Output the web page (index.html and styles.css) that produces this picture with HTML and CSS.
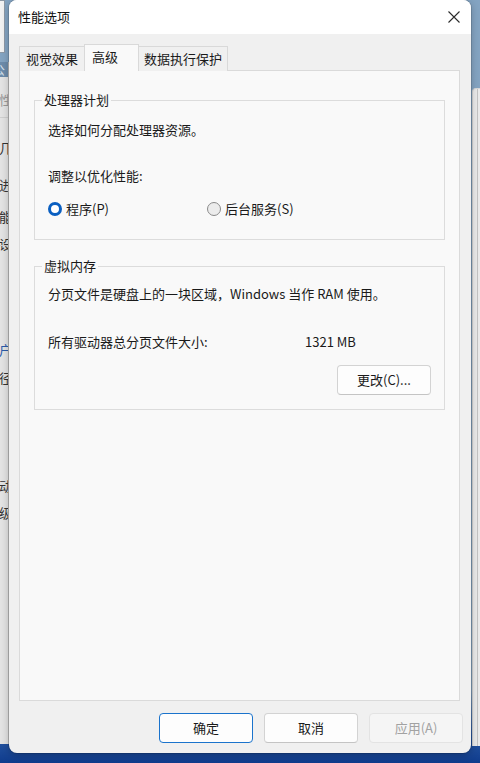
FILE: index.html
```html
<!DOCTYPE html>
<html lang="zh-CN">
<head>
<meta charset="utf-8">
<title>性能选项</title>
<link rel="stylesheet" href="styles.css">
</head>
<body>
<div class="desk">
  <div class="bg-box"></div>
  <div class="bg-left">
    <div class="bl-head">公</div>
    <div class="bl-row r1">性</div>
    <div class="bl-row r2">几</div>
    <div class="bl-row r3">进</div>
    <div class="bl-row r4">能</div>
    <div class="bl-row r5">设</div>
    <div class="bl-row r6">户</div>
    <div class="bl-row r7">径</div>
    <div class="bl-row r8">动</div>
    <div class="bl-row r9">级</div>
  </div>
  <div class="bg-right"><div class="br-line"></div></div>

  <div class="dialog">
    <div class="titlebar">
      <span class="title">性能选项</span>
      <svg class="close" width="12" height="12" viewBox="0 0 12 12"><path d="M0.5 0.5 L11.5 11.5 M11.5 0.5 L0.5 11.5" stroke="#2b2b2b" stroke-width="1.1" fill="none"/></svg>
    </div>
    <div class="body">
      <div class="tabs">
        <div class="tab t1">视觉效果</div>
        <div class="tab t2 active">高级</div>
        <div class="tab t3">数据执行保护</div>
      </div>
      <div class="panel">
        <fieldset class="group g1">
          <legend>处理器计划</legend>
          <p class="line l1">选择如何分配处理器资源。</p>
          <p class="line l2">调整以优化性能:</p>
          <div class="radios">
            <label class="radio r-a"><span class="dot on"></span>程序(P)</label>
            <label class="radio r-b"><span class="dot"></span>后台服务(S)</label>
          </div>
        </fieldset>
        <fieldset class="group g2">
          <legend>虚拟内存</legend>
          <p class="line l3">分页文件是硬盘上的一块区域，Windows 当作 RAM 使用。</p>
          <div class="line size-row"><span class="size-label">所有驱动器总分页文件大小:</span><span class="size-val">1321 MB</span></div>
          <div class="change-row"><button class="btn change">更改(C)...</button></div>
        </fieldset>
      </div>
      <div class="buttons">
        <button class="btn primary">确定</button>
        <button class="btn">取消</button>
        <button class="btn disabled">应用(A)</button>
      </div>
    </div>
  </div>
</div>
</body>
</html>
```
FILE: styles.css
```css
* { box-sizing: border-box; }
html, body { margin: 0; padding: 0; }
body {
  width: 480px;
  height: 763px;
  overflow: hidden;
  font-family: "Noto Sans CJK SC", "Noto Sans", sans-serif;
  font-size: 13px;
  color: #1a1a1a;
}
.desk {
  position: relative;
  width: 480px;
  height: 763px;
  overflow: hidden;
  background: linear-gradient(to bottom, #84a4c2 0px, #86a5c2 690px, #2a5aa6 735px, #0f3b8c 763px);
}
.bg-box {
  position: absolute;
  left: -40px; top: 0;
  width: 45px; height: 53px;
  background: #f3f3f3;
  border: 1px solid #8d99a6;
}
.bg-left {
  position: absolute;
  left: -100px; top: 62px;
  width: 109px; height: 682px;
  background: #e4e4e4;
  border-right: 1px solid #c9c9c9;
  overflow: hidden;
}
.bl-head {
  height: 15px;
  background: #6d8cab;
  color: #dde6ef;
  font-size: 12px;
  line-height: 15px;
  text-align: right;
  padding-right: 3px;
}
.bl-row {
  position: absolute;
  right: -4px;
  font-size: 13px;
  line-height: 16px;
  color: #333;
}
.r1 { top: 30px; color: #9a9a9a; }
.r2 { top: 78px; }
.r3 { top: 115px; }
.r4 { top: 147px; }
.r5 { top: 174px; }
.r6 { top: 280px; color: #2a5ba8; }
.r7 { top: 308px; }
.r8 { top: 416px; }
.r9 { top: 443px; }
.bg-left::before {
  content: "";
  position: absolute; left: 0; right: 0; top: 55px; height: 1px; background: #cfcfcf;
}
.bg-left::after {
  content: "";
  position: absolute; left: 0; right: 0; top: 183px; height: 1px; background: #cfcfcf;
}
.bg-right {
  position: absolute;
  left: 472px; top: 88px;
  width: 40px; height: 658px;
  background: #ebebeb;
  border-left: 1px solid #cfcfcf;
  border-top: 1px solid #d8d8d8;
  border-top-left-radius: 4px;
}
.br-line {
  position: absolute;
  left: 4px; top: 0; bottom: 0;
  width: 1px;
  background: #c4c4c4;
}

.dialog {
  position: absolute;
  left: 9px; top: 0;
  width: 462px; height: 753px;
  background: #f0f0f0;
  border-radius: 8px;
  overflow: hidden;
  box-shadow: 0 0 0 1px rgba(0,0,0,0.12), 0 2px 8px rgba(0,0,0,0.25);
  display: flex;
  flex-direction: column;
}
.titlebar {
  height: 34px;
  background: #ffffff;
  display: flex;
  align-items: center;
  justify-content: space-between;
  padding: 0 11px 0 9px;
  flex: none;
}
.title { font-size: 13px; line-height: 18px; color: #111; }
.close { display: block; margin-top: -1px; }

.body {
  flex: 1;
  display: flex;
  flex-direction: column;
  padding: 10px 0 0 10px;
}
.tabs {
  display: flex;
  align-items: flex-end;
  height: 27px;
  position: relative;
  z-index: 2;
  margin-bottom: -1px;
}
.tab {
  height: 25px;
  border: 1px solid #d9d9d9;
  border-bottom: none;
  background: #f0f0f0;
  line-height: 23px;
  font-size: 13px;
  color: #1a1a1a;
  text-align: center;
}
.t1 { width: 65px; border-right: none; }
.t2 { width: 55px; }
.t3 { width: 89px; border-left: none; }
.tab.active {
  height: 27px;
  background: #f9f9f9;
  text-align: left;
  padding-left: 7px;
  line-height: 24px;
}
.panel {
  width: 441px;
  height: 631px;
  background: #f9f9f9;
  border: 1px solid #dadada;
  padding: 20px 14px 0 14px;
  flex: none;
}
.group {
  margin: 0;
  border: 1px solid #dcdcdc;
  padding: 0 13px;
  min-width: 0;
}
.group legend {
  padding: 0 2px;
  margin-left: -6px;
  line-height: 18px;
  font-size: 13px;
}
.g1 { padding-top: 12px; padding-bottom: 21px; }
.g2 { margin-top: 17px; padding-top: 10px; padding-bottom: 14px; }
.line { margin: 0; line-height: 18px; white-space: nowrap; }
.l2 { margin-top: 28px; }
.radios {
  margin-top: 15px;
  display: flex;
  height: 18px;
  align-items: center;
}
.radio {
  display: flex;
  align-items: center;
  line-height: 18px;
}
.r-a { width: 159px; }
.dot {
  width: 14px; height: 14px;
  border-radius: 50%;
  border: 1px solid #8a8a8a;
  background: #ececec;
  margin-right: 4px;
  flex: none;
}
.dot.on {
  border: 3px solid #0a5fc1;
  background: #ffffff;
}
.size-row { margin-top: 30px; display: flex; }
.size-label { width: 257px; }
.change-row {
  margin-top: 14px;
  display: flex;
  justify-content: flex-end;
}
.btn {
  width: 94px; height: 30px;
  font-family: inherit;
  font-size: 13px;
  color: #1a1a1a;
  background: #fdfdfd;
  border: 1px solid #d3d3d3;
  border-bottom-color: #c4c4c4;
  border-radius: 4px;
  padding: 0;
  line-height: 28px;
}
.buttons {
  margin-top: 12px;
  display: flex;
  justify-content: flex-end;
  gap: 11px;
  padding-right: 8px;
}
.btn.primary { border: 1px solid #1a73cc; }
.btn.disabled {
  background: #f5f5f5;
  border-color: #e3e3e3;
  color: #a2a2a2;
}
```
